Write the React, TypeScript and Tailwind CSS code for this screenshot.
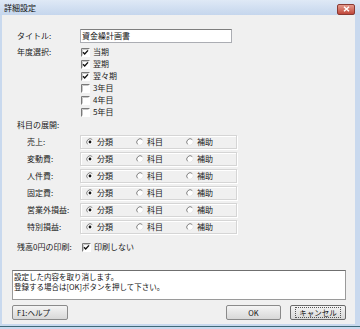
import React from "react";

const font = { fontFamily: '"Noto Sans CJK JP", "Noto Sans", sans-serif' };

function Check({ checked }: { checked: boolean }) {
  return (
    <svg width="9" height="9" viewBox="0 0 9 9" className="shrink-0">
      <rect x="0" y="0" width="9" height="9" fill="#ffffff" />
      <path d="M0.5 8.5 V0.5 H8.5" stroke="#7a7a7a" fill="none" />
      <path d="M1.5 7.5 V1.5 H7.5" stroke="#c8c8c8" fill="none" />
      {checked && <path d="M2 4.2 L3.7 6 L7 2.4" stroke="#111" strokeWidth="1.4" fill="none" />}
    </svg>
  );
}

function Radio({ checked }: { checked: boolean }) {
  return (
    <svg width="8" height="8" viewBox="0 0 8 8" className="shrink-0">
      <circle cx="4" cy="4" r="3.4" fill="#ffffff" />
      <path d="M6.4 1.6 A3.4 3.4 0 0 0 1.6 6.4" stroke="#808080" strokeWidth="1" fill="none" />
      <path d="M1.6 6.4 A3.4 3.4 0 0 0 6.4 1.6" stroke="#e6e6e6" strokeWidth="1" fill="none" />
      {checked && <circle cx="4" cy="4" r="1.4" fill="#111" />}
    </svg>
  );
}

const years: [string, boolean][] = [
  ["当期", true],
  ["翌期", true],
  ["翌々期", true],
  ["3年目", false],
  ["4年目", false],
  ["5年目", false],
];

const groups = ["売上:", "変動費:", "人件費:", "固定費:", "営業外損益:", "特別損益:"];

export default function App() {
  return (
    <div
      className="w-[360px] h-[329px] flex flex-col bg-[#c9d9ee] text-[8px] text-[#1a1a1a] leading-none overflow-hidden"
      style={font}
    >
      {/* Title bar */}
      <div className="h-[15px] flex items-center justify-between pl-[4px] pr-[5px] bg-gradient-to-b from-[#dfe9f6] to-[#c5d6ed] shrink-0">
        <span className="text-[8px] text-[#111]">詳細設定</span>
        <div className="w-[18px] h-[11px] mt-[3px] rounded-[2px] border border-[#8a3a33] bg-gradient-to-b from-[#e49a8e] to-[#c0463a] flex items-center justify-center">
          <svg width="7" height="6" viewBox="0 0 7 6">
            <path d="M1 0.8 L6 5.2 M6 0.8 L1 5.2" stroke="#ffffff" strokeWidth="1.5" />
          </svg>
        </div>
      </div>

      {/* Body with frame */}
      <div className="flex-1 flex pl-[2px] pr-[5px]">
        <div className="flex-1 bg-[#f0f0f0] flex flex-col pt-[14px] pl-[15px] pr-[9px]">
          {/* Title row */}
          <div className="flex items-center h-[14px]">
            <span className="w-[63px]">タイトル:</span>
            <div className="w-[152px] h-[14px] bg-white border border-[#abadb3] border-t-[#7e7e7e] flex items-center pl-[1px] text-[8px] text-[#111]">
              資金繰計画書
            </div>
          </div>

          {/* Year rows */}
          <div className="flex mt-[3px]">
            <span className="w-[63px] h-[12px] flex items-center">年度選択:</span>
            <div className="flex flex-col">
              {years.map(([t, c]) => (
                <div key={t} className="h-[12px] flex items-center gap-[3px] pl-[1px]">
                  <Check checked={c} />
                  <span>{t}</span>
                </div>
              ))}
            </div>
          </div>

          <div className="h-[12px] flex items-center mt-[1px]">科目の展開:</div>

          <div className="flex flex-col gap-[3px] mt-[4px]">
            {groups.map((g) => (
              <div key={g} className="flex items-center h-[14px]">
                <span className="w-[53px] ml-[10px]">{g}</span>
                <div className="w-[157px] h-[14px] border border-[#d5d5d5] shadow-[inset_1px_1px_0_#ffffff,1px_1px_0_#ffffff] flex items-center pl-[5px]">
                  <div className="w-[50px] flex items-center gap-[3px]">
                    <Radio checked={true} />
                    <span>分類</span>
                  </div>
                  <div className="w-[50px] flex items-center gap-[3px]">
                    <Radio checked={false} />
                    <span>科目</span>
                  </div>
                  <div className="w-[50px] flex items-center gap-[3px]">
                    <Radio checked={false} />
                    <span>補助</span>
                  </div>
                </div>
              </div>
            ))}
          </div>

          <div className="flex items-center h-[12px] mt-[7px]">
            <span className="w-[65px]">残高0円の印刷:</span>
            <div className="flex items-center gap-[3px]">
              <Check checked={true} />
              <span>印刷しない</span>
            </div>
          </div>

          <div className="-ml-[5px] mt-[17px] w-[334px] h-[30px] bg-white border border-[#9a9a9a] border-t-[#6f6f6f] pl-[1px] pt-[1px] text-[7.5px] leading-[10px] text-[#111]">
            <div>設定した内容を取り消します。</div>
            <div>登録する場合は[OK]ボタンを押して下さい。</div>
          </div>

          <div className="-ml-[5px] w-[334px] mt-[5px] flex items-center">
            <button className="w-[56px] h-[15px] rounded-[2px] border border-[#8a8a8a] bg-gradient-to-b from-[#f4f4f4] to-[#d8d8d8] text-left pl-[4px] text-[7.5px] text-[#111]">
              F1:ヘルプ
            </button>
            <div className="flex-1" />
            <button className="w-[55px] h-[15px] rounded-[2px] border border-[#8a8a8a] bg-gradient-to-b from-[#f4f4f4] to-[#d8d8d8] text-[7.5px] text-[#111]">
              OK
            </button>
            <button className="ml-[9px] w-[56px] h-[15px] rounded-[2px] border border-[#6a6a6a] bg-gradient-to-b from-[#f4f4f4] to-[#d8d8d8] text-[7.5px] text-[#111] flex items-center justify-center">
              <span className="border border-dotted border-[#555] px-[3px] leading-[9px]">キャンセル</span>
            </button>
          </div>
        </div>
      </div>
      <div className="h-[2px] bg-[#c9d9ee] shrink-0" />
      <div className="h-[1px] bg-[#3f6a78] shrink-0" />
      <div className="h-[2px] bg-[#c9d9ee] shrink-0" />
    </div>
  );
}
